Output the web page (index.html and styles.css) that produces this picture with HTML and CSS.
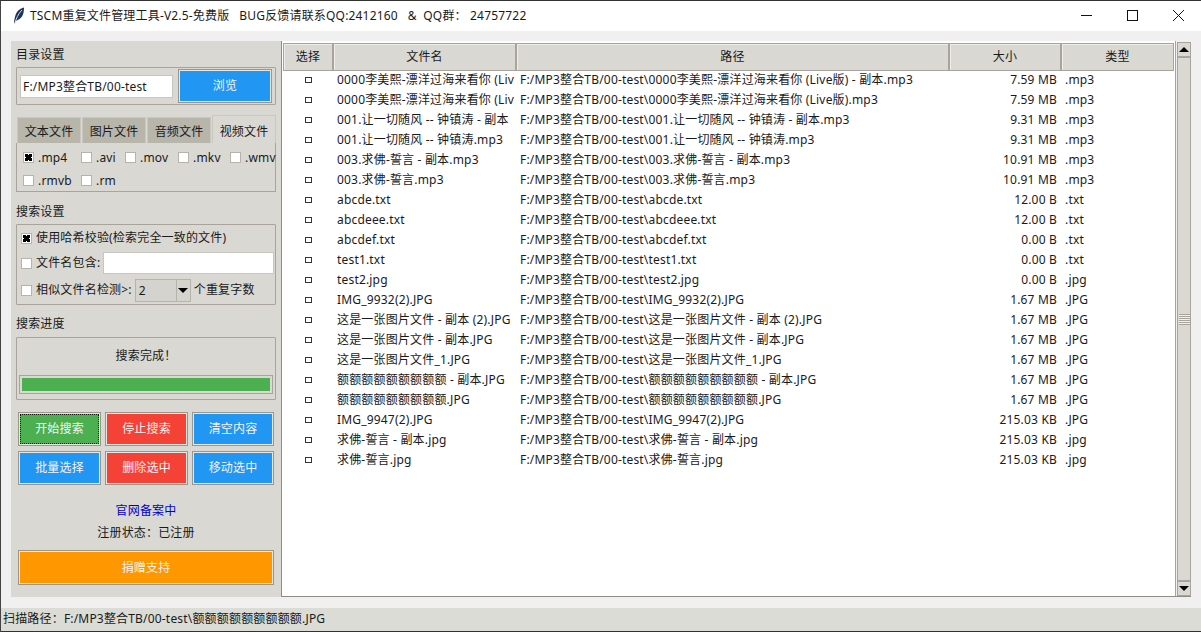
FILE: index.html
```html
<!DOCTYPE html>
<html lang="en">

<head>
    <meta charset="UTF-8">
    <meta name="viewport" content="width=device-width, initial-scale=1.0">
    <link rel="stylesheet" href="styles.css">
    <title>TSCM重复文件管理工具</title>
</head>

<body>
    <div class="window">
        <div class="titlebar">
            <svg class="app-icon" width="12" height="18" viewBox="0 0 12 18">
                <path d="M1 17 C1 13 2 8 4 5 C5.500 3 8 1.200 11 0.500 C11 4 10.500 7 9 9.500 C7.500 11.500 5 13 2.500 14 Z" fill="#1f3358" />
                <path d="M2 16 C3 12 5 7 9 3" stroke="#d5deee" stroke-width="1" fill="none" />
            </svg>
            <span class="title-text">TSCM重复文件管理工具-V2.5-免费版&nbsp;&nbsp; BUG反馈请联系QQ:2412160 &nbsp;&nbsp;&amp;&nbsp; QQ群： 24757722</span>
            <div class="win-controls">
                <svg width="46" height="30" viewBox="0 0 46 30"><path d="M18 14.500 H29" stroke="#111" /></svg>
                <svg width="46" height="30" viewBox="0 0 46 30"><rect x="18.500" y="9.500" width="10" height="10" fill="none" stroke="#111" /></svg>
                <svg width="46" height="30" viewBox="0 0 46 30"><path d="M18 9 L29 20 M29 9 L18 20" stroke="#111" /></svg>
            </div>
        </div>

        <div class="content">
            <div class="side">
                <div class="label">目录设置</div>
                <div class="group dir-group">
                    <div class="entry dir-entry">F:/MP3整合TB/00-test</div>
                    <div class="btn blue browse">浏览</div>
                </div>

                <div class="tabs">
                    <div class="tab">文本文件</div>
                    <div class="tab">图片文件</div>
                    <div class="tab">音频文件</div>
                    <div class="tab active">视频文件</div>
                </div>
                <div class="tab-body">
                    <div class="ext-row">
                        <label class="check w-mp4"><i class="box on"></i>.mp4</label>
                        <label class="check w-avi"><i class="box"></i>.avi</label>
                        <label class="check w-mov"><i class="box"></i>.mov</label>
                        <label class="check w-mkv"><i class="box"></i>.mkv</label>
                        <label class="check"><i class="box"></i>.wmv</label>
                    </div>
                    <div class="ext-row">
                        <label class="check w-mp4"><i class="box"></i>.rmvb</label>
                        <label class="check"><i class="box"></i>.rm</label>
                    </div>
                </div>

                <div class="label label-search">搜索设置</div>
                <div class="group search-group">
                    <label class="check"><i class="box on"></i>使用哈希校验(检索完全一致的文件)</label>
                    <div class="search-row">
                        <label class="check"><i class="box"></i>文件名包含:</label>
                        <div class="entry name-entry"></div>
                    </div>
                    <div class="search-row similar-row">
                        <label class="check"><i class="box"></i>相似文件名检测&gt;:</label>
                        <div class="combo"><span class="combo-val">2</span><span class="combo-arrow"><i class="tri-down"></i></span></div>
                        <span>个重复字数</span>
                    </div>
                </div>

                <div class="label label-progress">搜索进度</div>
                <div class="group progress-group">
                    <div class="progress-text">搜索完成！</div>
                    <div class="progress"><div class="progress-bar"></div></div>
                </div>

                <div class="actions">
                    <div class="btn green"><span class="focus">开始搜索</span></div>
                    <div class="btn red">停止搜索</div>
                    <div class="btn blue">清空内容</div>
                    <div class="btn blue">批量选择</div>
                    <div class="btn red">删除选中</div>
                    <div class="btn blue">移动选中</div>
                </div>

                <div class="site-link">官网备案中</div>
                <div class="reg">注册状态：已注册</div>
                <div class="btn orange">捐赠支持</div>
            </div>

            <div class="main">
                <div class="tree">
                    <div class="tree-head row-grid">
                        <div class="th">选择</div>
                        <div class="th">文件名</div>
                        <div class="th">路径</div>
                        <div class="th">大小</div>
                        <div class="th">类型</div>
                    </div>
                    <div class="row row-grid"><div class="sel"><i></i></div><div class="cell">0000李美熙-漂洋过海来看你 (Liv</div><div class="cell">F:/MP3整合TB/00-test\0000李美熙-漂洋过海来看你 (Live版) - 副本.mp3</div><div class="size">7.59 MB</div><div class="cell">.mp3</div></div>
                    <div class="row row-grid"><div class="sel"><i></i></div><div class="cell">0000李美熙-漂洋过海来看你 (Liv</div><div class="cell">F:/MP3整合TB/00-test\0000李美熙-漂洋过海来看你 (Live版).mp3</div><div class="size">7.59 MB</div><div class="cell">.mp3</div></div>
                    <div class="row row-grid"><div class="sel"><i></i></div><div class="cell">001.让一切随风 -- 钟镇涛 - 副本</div><div class="cell">F:/MP3整合TB/00-test\001.让一切随风 -- 钟镇涛 - 副本.mp3</div><div class="size">9.31 MB</div><div class="cell">.mp3</div></div>
                    <div class="row row-grid"><div class="sel"><i></i></div><div class="cell">001.让一切随风 -- 钟镇涛.mp3</div><div class="cell">F:/MP3整合TB/00-test\001.让一切随风 -- 钟镇涛.mp3</div><div class="size">9.31 MB</div><div class="cell">.mp3</div></div>
                    <div class="row row-grid"><div class="sel"><i></i></div><div class="cell">003.求佛-誓言 - 副本.mp3</div><div class="cell">F:/MP3整合TB/00-test\003.求佛-誓言 - 副本.mp3</div><div class="size">10.91 MB</div><div class="cell">.mp3</div></div>
                    <div class="row row-grid"><div class="sel"><i></i></div><div class="cell">003.求佛-誓言.mp3</div><div class="cell">F:/MP3整合TB/00-test\003.求佛-誓言.mp3</div><div class="size">10.91 MB</div><div class="cell">.mp3</div></div>
                    <div class="row row-grid"><div class="sel"><i></i></div><div class="cell">abcde.txt</div><div class="cell">F:/MP3整合TB/00-test\abcde.txt</div><div class="size">12.00 B</div><div class="cell">.txt</div></div>
                    <div class="row row-grid"><div class="sel"><i></i></div><div class="cell">abcdeee.txt</div><div class="cell">F:/MP3整合TB/00-test\abcdeee.txt</div><div class="size">12.00 B</div><div class="cell">.txt</div></div>
                    <div class="row row-grid"><div class="sel"><i></i></div><div class="cell">abcdef.txt</div><div class="cell">F:/MP3整合TB/00-test\abcdef.txt</div><div class="size">0.00 B</div><div class="cell">.txt</div></div>
                    <div class="row row-grid"><div class="sel"><i></i></div><div class="cell">test1.txt</div><div class="cell">F:/MP3整合TB/00-test\test1.txt</div><div class="size">0.00 B</div><div class="cell">.txt</div></div>
                    <div class="row row-grid"><div class="sel"><i></i></div><div class="cell">test2.jpg</div><div class="cell">F:/MP3整合TB/00-test\test2.jpg</div><div class="size">0.00 B</div><div class="cell">.jpg</div></div>
                    <div class="row row-grid"><div class="sel"><i></i></div><div class="cell">IMG_9932(2).JPG</div><div class="cell">F:/MP3整合TB/00-test\IMG_9932(2).JPG</div><div class="size">1.67 MB</div><div class="cell">.JPG</div></div>
                    <div class="row row-grid"><div class="sel"><i></i></div><div class="cell">这是一张图片文件 - 副本 (2).JPG</div><div class="cell">F:/MP3整合TB/00-test\这是一张图片文件 - 副本 (2).JPG</div><div class="size">1.67 MB</div><div class="cell">.JPG</div></div>
                    <div class="row row-grid"><div class="sel"><i></i></div><div class="cell">这是一张图片文件 - 副本.JPG</div><div class="cell">F:/MP3整合TB/00-test\这是一张图片文件 - 副本.JPG</div><div class="size">1.67 MB</div><div class="cell">.JPG</div></div>
                    <div class="row row-grid"><div class="sel"><i></i></div><div class="cell">这是一张图片文件_1.JPG</div><div class="cell">F:/MP3整合TB/00-test\这是一张图片文件_1.JPG</div><div class="size">1.67 MB</div><div class="cell">.JPG</div></div>
                    <div class="row row-grid"><div class="sel"><i></i></div><div class="cell">额额额额额额额额额 - 副本.JPG</div><div class="cell">F:/MP3整合TB/00-test\额额额额额额额额额 - 副本.JPG</div><div class="size">1.67 MB</div><div class="cell">.JPG</div></div>
                    <div class="row row-grid"><div class="sel"><i></i></div><div class="cell">额额额额额额额额额.JPG</div><div class="cell">F:/MP3整合TB/00-test\额额额额额额额额额.JPG</div><div class="size">1.67 MB</div><div class="cell">.JPG</div></div>
                    <div class="row row-grid"><div class="sel"><i></i></div><div class="cell">IMG_9947(2).JPG</div><div class="cell">F:/MP3整合TB/00-test\IMG_9947(2).JPG</div><div class="size">215.03 KB</div><div class="cell">.JPG</div></div>
                    <div class="row row-grid"><div class="sel"><i></i></div><div class="cell">求佛-誓言 - 副本.jpg</div><div class="cell">F:/MP3整合TB/00-test\求佛-誓言 - 副本.jpg</div><div class="size">215.03 KB</div><div class="cell">.jpg</div></div>
                    <div class="row row-grid"><div class="sel"><i></i></div><div class="cell">求佛-誓言.jpg</div><div class="cell">F:/MP3整合TB/00-test\求佛-誓言.jpg</div><div class="size">215.03 KB</div><div class="cell">.jpg</div></div>
                </div>
                <div class="scrollbar">
                    <div class="sb-btn"><i class="tri-up"></i></div>
                    <div class="sb-thumb"><span class="grip"></span></div>
                    <div class="sb-btn"><i class="tri-down"></i></div>
                </div>
            </div>
        </div>

        <div class="statusbar">扫描路径：F:/MP3整合TB/00-test\额额额额额额额额额.JPG</div>
    </div>
</body>

</html>
```

FILE: styles.css
```css
:root {
    --font: "Noto Sans", "Noto Sans CJK SC", sans-serif;
    --panel: #d9d8d3;
    --line: #a8a49c;
    --blue: #2196f3;
    --red: #f44336;
    --green: #4caf50;
    --orange: #ff9800;
    --text: #1a1a1a;
}

* {
    box-sizing: border-box;
}

html,
body {
    margin: 0;
    height: 632px;
    overflow: hidden;
}

body {
    font-family: var(--font);
    font-size: 12px;
    line-height: 16px;
    letter-spacing: 0.18px;
    color: var(--text);
}

.window {
    height: 632px;
    display: flex;
    flex-direction: column;
    background-color: #f0f0f0;
    border-top: 1px solid #333;
    border-left: 1px solid #444;
}

.titlebar {
    height: 30px;
    flex: none;
    display: flex;
    align-items: center;
    background-color: #fff;
    padding-left: 12px;
}

.app-icon {
    flex: none;
}

.title-text {
    margin-left: 5px;
    white-space: nowrap;
}

.win-controls {
    margin-left: auto;
    display: flex;
}

.win-controls svg {
    display: block;
}

.content {
    flex: none;
    height: 556px;
    margin: 10px 0 0 10px;
    display: flex;
}

.side {
    width: 271px;
    flex: none;
    background-color: var(--panel);
    padding: 6px 5px 0 5px;
    border-right: 1px solid #8f8c85;
}

.label {
    height: 16px;
}

.group {
    border: 1px solid var(--line);
    border-radius: 1px;
}

.dir-group {
    margin-top: 4px;
    height: 38px;
    display: flex;
    align-items: center;
    padding: 0 3px;
    justify-content: space-between;
}

.entry {
    background-color: #fff;
    border: 1px solid #c8c6c0;
    white-space: nowrap;
    overflow: hidden;
}

.dir-entry {
    width: 153px;
    height: 23px;
    line-height: 21px;
    padding-left: 2px;
}

.btn {
    display: flex;
    align-items: center;
    justify-content: center;
    color: #f4f4f4;
    border: 1px solid #9b968c;
    box-shadow: inset 0 0 0 1px #e8e6e2;
}

.browse {
    width: 94px;
    height: 34px;
}

.blue {
    background-color: var(--blue);
}

.red {
    background-color: var(--red);
}

.green {
    background-color: var(--green);
}

.orange {
    background-color: var(--orange);
    height: 35px;
    margin: 0 2px;
}

.tabs {
    display: flex;
    margin-top: 10px;
    height: 28px;
    align-items: flex-end;
    padding-left: 1px;
    gap: 1px;
}

.tab {
    flex: none;
    width: 64px;
    height: 26px;
    line-height: 27px;
    text-align: center;
    background-color: #b8b5ab;
    border: 1px solid #c9c7c0;
    border-bottom: none;
}

.tab.active {
    height: 28px;
    background-color: var(--panel);
    line-height: 31px;
}

.tab-body {
    height: 49px;
    border: 1px solid var(--line);
    border-top: none;
    padding: 3px 0 0 6px;
}

.ext-row {
    height: 23px;
    display: flex;
    align-items: center;
    white-space: nowrap;
}

.check {
    display: flex;
    align-items: center;
    white-space: nowrap;
    flex: none;
}

.w-mp4 {
    width: 58px;
}

.w-avi {
    width: 44px;
}

.w-mov {
    width: 53px;
}

.w-mkv {
    width: 52px;
}

.box {
    width: 11px;
    height: 11px;
    flex: none;
    margin-right: 4px;
    background-color: #fff;
    border: 1px solid #b5b3ac;
    display: block;
    position: relative;
}

.box.on::after {
    content: "";
    position: absolute;
    left: 1px;
    top: 1px;
    width: 7px;
    height: 7px;
    background:
        linear-gradient(45deg, transparent 34%, #000 34%, #000 66%, transparent 66%),
        linear-gradient(-45deg, transparent 34%, #000 34%, #000 66%, transparent 66%);
}

.label-search {
    margin-top: 12px;
}

.search-group {
    margin-top: 4px;
    height: 81px;
    padding: 2px 1px 0 4px;
    display: flex;
    flex-direction: column;
    gap: 2px;
}

.search-group > .check {
    height: 22px;
}

.search-row {
    height: 24px;
    display: flex;
    align-items: center;
    gap: 3px;
}

.similar-row {
    margin-top: 1px;
}

.name-entry {
    flex: 1;
    height: 22px;
}

.combo {
    width: 56px;
    height: 23px;
    display: flex;
    border: 1px solid #b5b3ac;
    background-color: #d4d3ce;
    flex: none;
}

.combo-val {
    flex: 1;
    padding-left: 3px;
    line-height: 21px;
}

.combo-arrow {
    width: 14px;
    border-left: 1px solid #b5b3ac;
    display: flex;
    align-items: center;
    justify-content: center;
}

.tri-down,
.tri-up {
    width: 0;
    height: 0;
    display: block;
    border-left: 5px solid transparent;
    border-right: 5px solid transparent;
}

.tri-down {
    border-top: 5px solid #000;
}

.tri-up {
    border-bottom: 5px solid #000;
}

.label-progress {
    margin-top: 11px;
}

.progress-group {
    margin-top: 5px;
    height: 63px;
    padding: 0 2px;
}

.progress-text {
    height: 37px;
    line-height: 36px;
    text-align: center;
}

.progress {
    height: 19px;
    border: 1px solid var(--line);
    padding: 2px 2px;
}

.progress-bar {
    height: 100%;
    background-color: var(--green);
}

.actions {
    display: grid;
    grid-template-columns: 83px 83px 82px;
    grid-auto-rows: 34px;
    gap: 5px 4px;
    margin: 12px 0 0 2px;
}

.focus {
    align-self: stretch;
    flex: 1;
    margin: 1px;
    border: 1px dotted #111;
    display: flex;
    align-items: center;
    justify-content: center;
}

.site-link {
    margin-top: 18px;
    text-align: center;
    color: #0000cc;
}

.reg {
    margin-top: 6px;
    margin-bottom: 9px;
    text-align: center;
}

.main {
    flex: 1;
    display: flex;
    margin-right: 10px;
    background-color: #fff;
    border-bottom: 1px solid #8f8c85;
    min-width: 0;
}

.tree {
    width: 893px;
    flex: none;
    padding: 2px 0 0 1px;
    overflow: hidden;
}

.row-grid {
    display: grid;
    grid-template-columns: 50px 183px 433px 112px 113px;
}

.tree-head {
    height: 27px;
}

.th {
    background-color: var(--panel);
    border: 1px solid #a8a49c;
    box-shadow: inset 1px 1px 0 #eeeDe9;
    text-align: center;
    line-height: 26px;
}

.row {
    height: 20px;
    line-height: 19px;
    white-space: nowrap;
}

.sel {
    display: flex;
    align-items: center;
    justify-content: center;
}

.sel i {
    width: 7px;
    height: 6px;
    border: 1px solid #333;
    display: block;
}

.cell {
    padding-left: 4px;
    overflow: hidden;
}

.size {
    padding-right: 4px;
    text-align: right;
}

.scrollbar {
    flex: 1;
    display: flex;
    flex-direction: column;
    background-color: #f0efed;
    padding: 1px 0 0 1px;
    border-left: 1px solid #a8a49c;
}

.sb-btn {
    height: 15px;
    flex: none;
    background-color: var(--panel);
    border: 1px solid #a8a49c;
    display: flex;
    align-items: center;
    justify-content: center;
}

.sb-thumb {
    flex: 1;
    background-color: var(--panel);
    border: 1px solid #a8a49c;
    display: flex;
    align-items: center;
    justify-content: center;
}

.grip {
    width: 11px;
    height: 11px;
    background: repeating-linear-gradient(#a8a49c 0, #a8a49c 1px, #f0efed 1px, #f0efed 2px);
}

.statusbar {
    height: 24px;
    margin-top: 11px;
    flex: none;
    background-color: #dcdcd6;
    line-height: 22px;
    padding-left: 2px;
    white-space: nowrap;
    border-bottom: 1px solid #333;
}
```
